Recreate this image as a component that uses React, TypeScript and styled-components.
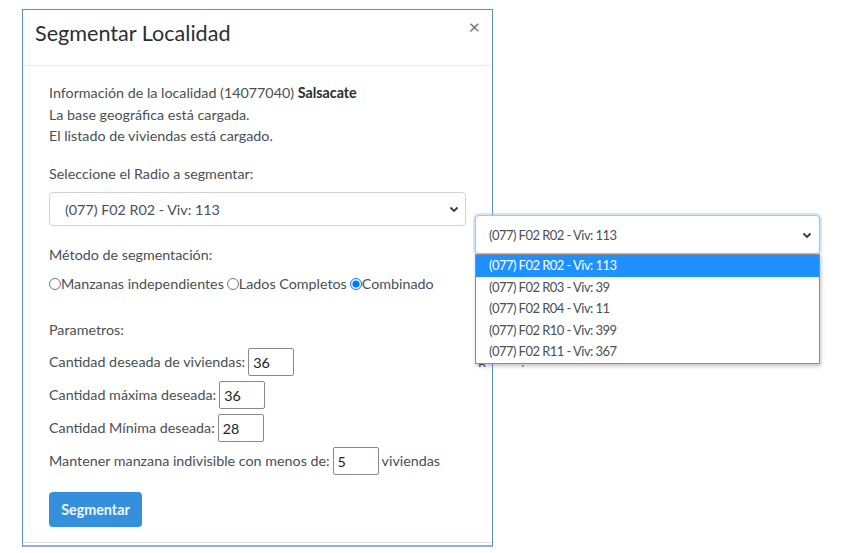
import React from "react";
import styled, { createGlobalStyle } from "styled-components";

const Global = createGlobalStyle`
  html, body { margin: 0; padding: 0; background: #fff; }
  body { font-family: Lato, "Noto Sans", sans-serif; color: #4a4f55; }
  * { box-sizing: border-box; }
`;

const Page = styled.div`
  position: relative;
  width: 858px;
  height: 553px;
  overflow: hidden;
  padding: 9px 0 0 22px;
`;

const Modal = styled.div`
  width: 471px;
  background: #fff;
  border: 1px solid #5f8fcd;
  border-bottom: 2px solid #98aed0;
`;

const Header = styled.div`
  height: 56px;
  display: flex;
  align-items: center;
  justify-content: space-between;
  padding: 0 12px 9px 12px;
  border-bottom: 1px solid #e9ecef;
`;

const Title = styled.h5`
  margin: 0;
  font-size: 21.6px;
  font-weight: 400;
  color: #2a2f34;
`;

const Close = styled.span`
  align-self: flex-start;
  margin-top: 6px;
  font-size: 20px;
  line-height: 1;
  color: #777;
`;

const Body = styled.div`
  padding: 16px 26px 15px 26px;
  font-size: 14.3px;
  line-height: 21.6px;
`;

const Line = styled.div<{ $gap?: number }>`
  margin-top: ${(p) => p.$gap ?? 0}px;
  white-space: nowrap;
`;

const Strong = styled.b`
  font-weight: 700;
  color: #2a2f34;
`;

const SelectBox = styled.div`
  margin-top: 8px;
  height: 34px;
  width: 417px;
  border: 1px solid #ced4da;
  border-radius: 4px;
  display: flex;
  align-items: center;
  padding: 0 6px 0 0;
  color: #495057;
`;

const SelectText = styled.span`
  flex: 1;
  padding-left: 15px;
  white-space: nowrap;
`;

const RadioRow = styled.div`
  margin-top: 7px;
  display: flex;
  align-items: center;
  white-space: nowrap;
`;

const Radio = styled.input`
  margin: 0;
  width: 12px;
  height: 12px;
  accent-color: #0075ff;
`;

const RadioLabel = styled.label`
  margin-right: 3px;
`;

const ParamRow = styled.div<{ $gap?: number }>`
  margin-top: ${(p) => p.$gap ?? 5}px;
  display: flex;
  align-items: center;
  height: 28px;
  white-space: nowrap;
`;

const NumInput = styled.input`
  margin: 0 3px 0 3px;
  width: 46px;
  height: 28px;
  border: 1px solid #8a8a8a;
  border-radius: 2px;
  padding: 0 4px;
  font: inherit;
  color: #222;
`;

const Button = styled.button`
  margin-top: 17px;
  width: 93px;
  height: 35px;
  border: none;
  border-radius: 4px;
  background: #3490dc;
  color: #f3f8fd;
  font-family: inherit;
  font-size: 14.3px;
  font-weight: 700;
`;

const Footer = styled.div`
  border-top: 1px solid #dee2e6;
  height: 3px;
`;

const Dropdown = styled.div`
  position: absolute;
  left: 475px;
  top: 215px;
  width: 345px;
`;

const DropSelect = styled.div`
  height: 39px;
  border: 1px solid #9cc5f0;
  border-radius: 4px;
  box-shadow: 0 0 0 2px rgba(130, 180, 240, 0.35);
  display: flex;
  align-items: center;
  padding: 0 7px 0 0;
  font-size: 13px;
  letter-spacing: -0.55px;
  color: #495057;
  background: #fff;
`;

const DropText = styled.span`
  flex: 1;
  padding-left: 13px;
  white-space: nowrap;
`;

const List = styled.ul`
  list-style: none;
  margin: 0;
  padding: 0;
  border: 1px solid #8d8d8d;
  box-shadow: 1px 2px 4px rgba(0, 0, 0, 0.25);
  background: #fff;
  position: relative;
  z-index: 2;
`;

const Item = styled.li<{ $active?: boolean }>`
  height: 21.6px;
  line-height: 21.6px;
  padding-left: 13px;
  font-size: 13px;
  letter-spacing: -0.55px;
  background: ${(p) => (p.$active ? "#1e90ff" : "#fff")};
  color: ${(p) => (p.$active ? "#fff" : "#4a4f55")};
`;

const Clipped = styled.div`
  height: 4px;
  overflow: hidden;
  padding-left: 3px;
  font-size: 13px;
  line-height: 13px;
  color: #4a4f55;
  margin-top: -1px;
`;

const Chevron = () => (
  <svg width="10" height="8" viewBox="0 0 10 8">
    <path d="M1.5 2.5 L5 6 L8.5 2.5" fill="none" stroke="#343a40" strokeWidth="1.8" />
  </svg>
);

const options = [
  "(077) F02 R02 - Viv: 113",
  "(077) F02 R03 - Viv: 39",
  "(077) F02 R04 - Viv: 11",
  "(077) F02 R10 - Viv: 399",
  "(077) F02 R11 - Viv: 367",
];

export default function App() {
  return (
    <>
      <Global />
      <Page>
        <Modal>
          <Header>
            <Title>Segmentar Localidad</Title>
            <Close>×</Close>
          </Header>
          <Body>
            <Line>
              Información de la localidad (14077040) <Strong>Salsacate</Strong>
            </Line>
            <Line>La base geográfica está cargada.</Line>
            <Line>El listado de viviendas está cargado.</Line>
            <Line $gap={16}>Seleccione el Radio a segmentar:</Line>
            <SelectBox>
              <SelectText>(077) F02 R02 - Viv: 113</SelectText>
              <Chevron />
            </SelectBox>
            <Line $gap={18}>Método de segmentación:</Line>
            <RadioRow>
              <Radio type="radio" name="m" id="m1" />
              <RadioLabel htmlFor="m1">Manzanas independientes</RadioLabel>
              <Radio type="radio" name="m" id="m2" />
              <RadioLabel htmlFor="m2">Lados Completos</RadioLabel>
              <Radio type="radio" name="m" id="m3" defaultChecked />
              <RadioLabel htmlFor="m3">Combinado</RadioLabel>
            </RadioRow>
            <Line $gap={24}>Parametros:</Line>
            <ParamRow $gap={8}>
              Cantidad deseada de viviendas: <NumInput defaultValue="36" />
            </ParamRow>
            <ParamRow>
              Cantidad máxima deseada: <NumInput defaultValue="36" />
            </ParamRow>
            <ParamRow>
              Cantidad Mínima deseada: <NumInput defaultValue="28" />
            </ParamRow>
            <ParamRow>
              Mantener manzana indivisible con menos de: <NumInput defaultValue="5" /> viviendas
            </ParamRow>
            <Button>Segmentar</Button>
          </Body>
          <Footer />
        </Modal>
        <Dropdown>
          <DropSelect>
            <DropText>(077) F02 R02 - Viv: 113</DropText>
            <Chevron />
          </DropSelect>
          <List>
            {options.map((o, i) => (
              <Item key={o} $active={i === 0}>
                {o}
              </Item>
            ))}
          </List>
          <Clipped>Parametros:</Clipped>
        </Dropdown>
      </Page>
    </>
  );
}
